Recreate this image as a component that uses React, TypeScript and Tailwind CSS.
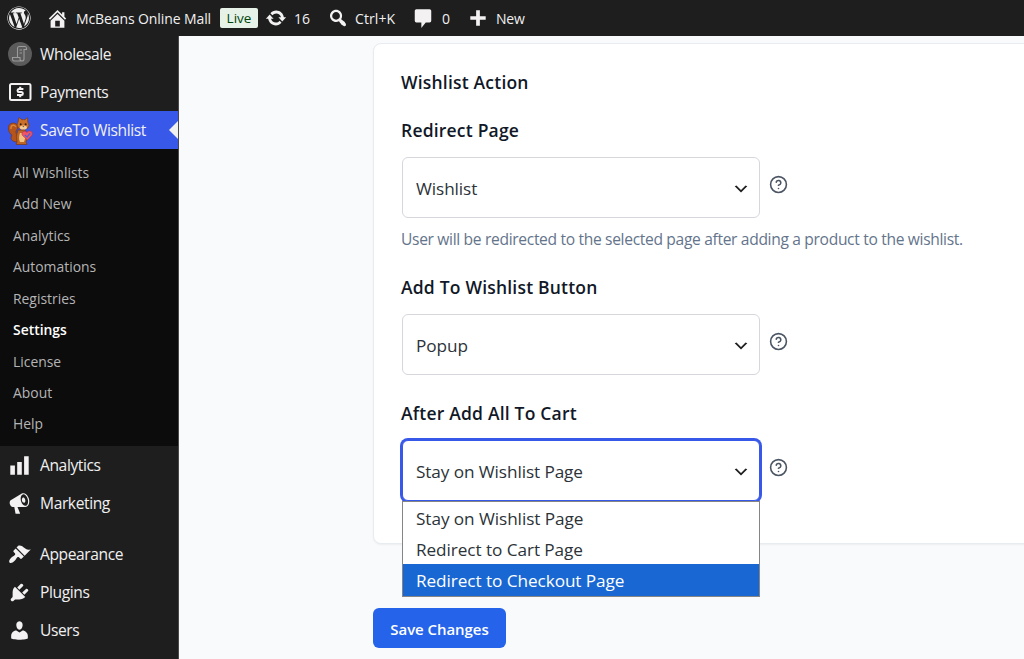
import React from "react";
import { FaWordpress } from "react-icons/fa";
import { CircleHelp } from "lucide-react";

const paths = {
    home: "M16 8.5l1.53 1.53-1.06 1.06L10 4.6l-6.47 6.49-1.06-1.06L10 2.5l4 4v-2h2v4zm-6-2.46l6 5.99V18H4v-5.97zM12 17v-5H8v5h4z",
    update: "M10.2 3.28c3.53 0 6.43 2.61 6.92 6h2.08l-3.5 4-3.5-4h2.32c-.45-1.97-2.21-3.45-4.32-3.45-1.45 0-2.73.71-3.54 1.78L4.95 5.66C6.23 4.2 8.11 3.28 10.2 3.28zm-.4 13.44c-3.52 0-6.43-2.61-6.92-6H.8l3.5-4c1.17 1.33 2.33 2.67 3.5 4H5.48c.45 1.97 2.21 3.45 4.32 3.45 1.45 0 2.73-.71 3.54-1.78l1.71 1.95c-1.28 1.46-3.15 2.38-5.25 2.38z",
    search: "M12.14 4.18c1.87 1.87 2.11 4.75.72 6.89.12.1.22.21.36.31.2.16.47.36.81.59.34.24.56.39.66.47.42.31.73.57.94.78.32.32.6.65.84 1 .25.35.44.69.59 1.04.14.35.21.68.18 1-.02.32-.14.59-.36.81s-.49.34-.81.36c-.31.02-.65-.04-.99-.19-.35-.14-.7-.34-1.04-.59-.35-.24-.68-.52-1-.84-.21-.21-.47-.52-.77-.93-.1-.13-.25-.35-.47-.66-.22-.32-.4-.57-.56-.78-.16-.2-.29-.35-.44-.5-2.07 1.09-4.69.76-6.44-.98-2.14-2.15-2.14-5.64 0-7.78 2.15-2.15 5.63-2.15 7.78 0zm-1.41 6.36c1.36-1.37 1.36-3.58 0-4.95-1.37-1.37-3.59-1.37-4.95 0-1.37 1.37-1.37 3.58 0 4.95 1.36 1.37 3.58 1.37 4.95 0z",
    comment: "M4 2h12q1.5 0 1.5 1.5v9q0 1.5-1.5 1.5h-3.5l-4 5v-5H4q-1.5 0-1.5-1.5v-9Q2.5 2 4 2z",
    plus: "M17 8.3v3.4h-5.3V17H8.3v-5.3H3V8.3h5.3V3h3.4v5.3z",
    chart: "M18 18V2h-4v16h4zm-6 0V7H8v11h4zm-6 0v-8H2v8h4z",
    megaphone: "M18.15 5.94c.46 1.62.38 3.22-.02 4.48-.42 1.28-1.26 2.18-2.3 2.48-.16.06-.26.06-.4.06-.06.02-.12.02-.18.02-.06.02-.14.02-.22.02h-6.8l2.22 5.5c.02.14-.06.26-.14.34-.08.1-.24.16-.34.16H6.95c-.1 0-.26-.06-.34-.16-.08-.08-.16-.2-.14-.34l-1-5.5H4.25l-.02-.02c-.5.06-1.08-.18-1.54-.62s-.88-1.08-1.06-1.88c-.24-.8-.2-1.56-.02-2.2.18-.62.58-1.08 1.06-1.3l.02-.02 9-5.4c.1-.06.18-.1.24-.16.06-.04.14-.08.24-.12.16-.08.28-.12.5-.18 1.04-.3 2.24.1 3.22.98s1.84 2.24 2.26 3.86zm-2.58 5.98h-.02c.4-.1.74-.34 1.04-.7.58-.7.86-1.76.86-3.04 0-.64-.1-1.3-.28-1.98-.34-1.36-1.02-2.5-1.78-3.24s-1.68-1.1-2.46-.88c-.82.22-1.4.96-1.7 2-.32 1.04-.28 2.36.06 3.72.38 1.36 1 2.5 1.8 3.24.78.74 1.62 1.1 2.48.88zm-2.54-7.08c.22-.04.42-.02.62.04.38.16.76.48 1.02 1s.42 1.2.42 1.78c0 .3-.04.56-.12.8-.18.48-.44.84-.86.94-.34.1-.8-.06-1.14-.4s-.64-.86-.78-1.5c-.18-.62-.12-1.24.02-1.72s.48-.84.82-.94z",
    appearance: "M14.48 11.06L7.41 3.99l1.5-1.5c.5-.56 2.3-.47 3.51.32 1.21.8 1.43 1.28 2.91 2.1 1.18.64 2.45 1.26 4.45.85zm-.71.71L6.7 4.7 4.93 6.47c-.39.39-.39 1.02 0 1.41l1.06 1.06c.39.39.39 1.03 0 1.42-.6.6-1.43 1.11-2.21 1.69-.35.26-.7.53-1.01.84C1.43 14.23.4 16.08 1.4 17.07c.99 1 2.84-.03 4.18-1.36.31-.31.58-.66.85-1.02.57-.78 1.08-1.61 1.69-2.21.39-.39 1.02-.39 1.41 0l1.06 1.06c.39.39 1.02.39 1.41 0z",
    plugins: "M13.11 4.36L9.87 7.6 8 5.73l3.24-3.24c.35-.34 1.05-.2 1.56.32.52.51.66 1.21.31 1.55zm-8 1.77l.91-1.12 9.01 9.01-1.19.84c-.71.71-2.63 1.16-3.82 1.16H6.14L4.9 17.26c-.59.59-1.54.59-2.12 0-.59-.58-.59-1.53 0-2.12l1.24-1.24v-3.88c0-1.13.4-3.19 1.09-3.89zm7.26 3.97l3.24-3.24c.34-.35 1.04-.21 1.55.31.52.51.66 1.21.31 1.55l-3.24 3.25z",
    users: "M10 9.25c-2.27 0-2.73-3.44-2.73-3.44C7 4.02 7.82 2 9.97 2c2.16 0 2.98 2.02 2.71 3.81 0 0-.41 3.44-2.68 3.44zm0 2.57L12.72 10c2.39 0 4.52 2.33 4.52 4.53v2.49s-3.65 1.13-7.24 1.13c-3.65 0-7.24-1.13-7.24-1.13v-2.49c0-2.25 1.94-4.48 4.47-4.48z",
};

function DashIcon({ name, className = "" }: { name: keyof typeof paths; className?: string }) {
    return (
        <svg viewBox="0 0 20 20" className={`shrink-0 fill-[#f3f1f1] ${className}`}>
            <path d={paths[name]} />
        </svg>
    );
}

function WholesaleIcon() {
    return (
        <svg viewBox="0 0 24 24" className="size-6" fill="none">
            <circle cx="12" cy="12" r="12" fill="#5b5b5b" />
            <path d="M9.5 15.5V6.5q0-2 2-2h5.5q1.5 0 1.5 2v1h-2.5M16 7v10q0 2-2 2H6q-1.5 0-1.5-2v-1.5h7.5v1.5q0 2 2 2M11.5 8h2.5M11.5 11h2.5" stroke="#9b9b9b" strokeWidth="1.1" />
        </svg>
    );
}

function PaymentsIcon() {
    return (
        <svg viewBox="0 0 24 20" className="w-6 h-5" fill="none" stroke="#f3f1f1">
            <rect x="2" y="2" width="20.5" height="16" rx="1.5" strokeWidth="2" />
            <path d="M15.4 7h-4.6q-1.2 0-1.2 1.5T10.8 10h2.8q1.2 0 1.2 1.5T13.6 13H9M12.2 4.8v2.2M12.2 13v2.2" strokeWidth="2.1" />
        </svg>
    );
}

function SquirrelIcon() {
    return (
        <svg viewBox="0 0 26 30" className="mt-0.5 w-[26px] h-[30px]">
            {/* tail */}
            <path d="M11 26C4 26 3 22 5 19C1 17 0 9 4 7.5c4-1.5 7.5 1 6.5 5-1 2-2 2.5-1.5 4.5 1 3 3 4 3 9z" fill="#b5551c" stroke="#7a3514" strokeWidth=".7" />
            <path d="M4 13c-.5-4 3-5 5-2" fill="none" stroke="#dc853b" strokeWidth="1.3" />
            {/* body */}
            <path d="M11 14q-3 6-1 12l-1 2.5h11l-1-2.5q3-5-1-12z" fill="#bd6524" stroke="#7a3514" strokeWidth=".7" />
            <path d="M13 17q-2 5 0 9h4q2-4 1-9z" fill="#f0c183" />
            {/* head */}
            <path d="M11 6L12 1.5l3 2.3q1.5-.5 3 0L20.5 1.5l.3 4.5q2.4 3.5 0 6-4.8 3-9.3 0-2.5-2.5-.5-6z" fill="#ca7029" stroke="#7a3514" strokeWidth=".6" />
            <ellipse cx="16.3" cy="11.5" rx="3.6" ry="2.1" fill="#f3cc96" />
            <circle cx="13.7" cy="8.3" r="1" fill="#33201a" />
            <circle cx="18.6" cy="8.3" r="1" fill="#33201a" />
            <path d="M15.3 10.3h2l-1 1z" fill="#4d2517" />
            {/* heart */}
            <path d="M20.5 24l-5-4.5c-2-3 2-6 4.5-3 2.5-3.3 7-.5 4.8 2.8z" fill="#f05465" stroke="#b9324c" strokeWidth=".6" />
            <path d="M17.9 19l2.2 2 3.2-3.7" fill="none" stroke="#5361d8" strokeWidth="1.3" />
        </svg>
    );
}

function MenuItem({ label, active, children }: { label: string; active?: boolean; children: React.ReactNode }) {
    return (
        <div className={`relative flex h-[38px] shrink-0 items-center pl-[6px] text-[15.6px] tracking-[-0.4px] text-[#f0f0f1] ${active ? "bg-[#3858e9]" : ""}`}>
            <span className="flex w-[27px] justify-center">{children}</span>
            <span className="ml-[7px] pt-[1.5px]">{label}</span>
            {active && <span className="absolute right-0 border-y-[9px] border-r-[9px] border-y-transparent border-r-[#f0f0f1]" />}
        </div>
    );
}

const submenu = ["All Wishlists", "Add New", "Analytics", "Automations", "Registries", "Settings", "License", "About", "Help"];

function Sidebar() {
    return (
        <aside className="flex w-[179px] shrink-0 flex-col overflow-hidden bg-[#1e1e1e] border-r border-[#4a4a4a]">
            <div className="-mt-px flex flex-col">
                <MenuItem label="Wholesale"><WholesaleIcon /></MenuItem>
                <MenuItem label="Payments"><PaymentsIcon /></MenuItem>
                <MenuItem label="SaveTo Wishlist" active><SquirrelIcon /></MenuItem>
            </div>
            <div className="h-[297px] shrink-0 bg-[#0c0c0c] pt-[8.6px] pl-[13px] text-[13.9px] text-[#b5b5b6]">
                {submenu.map((item) => (
                    <div key={item} className={`flex h-[31.45px] items-center ${item === "Settings" ? "font-semibold text-white" : ""}`}>
                        {item}
                    </div>
                ))}
            </div>
            <MenuItem label="Analytics"><DashIcon name="chart" className="size-[23px]" /></MenuItem>
            <MenuItem label="Marketing"><DashIcon name="megaphone" className="size-[23px]" /></MenuItem>
            <div className="h-[13px] shrink-0" />
            <MenuItem label="Appearance"><DashIcon name="appearance" className="size-[23px]" /></MenuItem>
            <MenuItem label="Plugins"><DashIcon name="plugins" className="size-[23px]" /></MenuItem>
            <MenuItem label="Users"><DashIcon name="users" className="size-[23px]" /></MenuItem>
        </aside>
    );
}

function TopBar() {
    return (
        <header className="flex h-9 shrink-0 items-center bg-[#1e1e1e] pl-[7px] text-[14px] text-[#f0f0f1]">
            <FaWordpress size={24} />
            <DashIcon name="home" className="ml-[15px] size-[23px]" />
            <span className="ml-[7px] w-[144px] whitespace-nowrap pt-px tracking-[-0.1px]">McBeans Online Mall</span>
            <span className="flex h-5 w-[38px] items-center justify-center rounded-[2px] bg-[#e6f2e8] text-[13.5px] text-[#00450c]">Live</span>
            <DashIcon name="update" className="ml-[7px] size-[22px]" />
            <span className="ml-[7px] w-[33px] pt-px">16</span>
            <DashIcon name="search" className="size-[22px]" />
            <span className="ml-[6px] w-[57px] pt-px tracking-[0.1px]">Ctrl+K</span>
            <DashIcon name="comment" className="size-[22px]" />
            <span className="ml-[8px] w-[25px] pt-px">0</span>
            <DashIcon name="plus" className="size-[22px]" />
            <span className="ml-[7px] pt-px tracking-[-0.2px]">New</span>
        </header>
    );
}

function SelectField({ label, value, open, children }: { label: string; value: string; open?: boolean; children?: React.ReactNode }) {
    return (
        <div>
            <h3 className="h-[27px] text-[17.5px] leading-[27px] font-semibold tracking-[0.2px] text-[#111827]">{label}</h3>
            <div className="relative mt-[13px] ml-px flex items-start">
                <div className={`flex h-[61px] w-[357.5px] items-center justify-between rounded-md border bg-white pr-[9px] pl-[13px] ${open ? "border-[#3858e9] ring-2 ring-[#3858e9]" : "border-[#d5d7dd]"}`}>
                    <span className="pt-0.5 text-[17.2px] tracking-[-0.09px] text-[#2c3338]">{value}</span>
                    <svg viewBox="0 0 20 20" className="mt-0.5 size-[18px]">
                        <path d="M5 6l5 5 5-5 2 1-7 7-7-7 2-1z" fill="#1f1f1f" />
                    </svg>
                </div>
                <CircleHelp size={19} strokeWidth={2} className="mt-[18px] ml-[9px] text-[#4b5563]" />
                {children}
            </div>
        </div>
    );
}

function App() {
    return (
        <div className="flex h-[659px] w-[1024px] flex-col overflow-hidden bg-[#f9fafc] font-['Open_Sans','Noto_Sans',sans-serif]">
            <TopBar />
            <div className="flex min-h-0 flex-1">
                <Sidebar />
                <main className="flex-1 pt-[7px] pl-[194px]">
                    <section className="h-[501px] w-[700px] rounded-lg border border-[#e8ebf0] bg-white pt-[25px] pl-[27px] shadow-xs">
                        <h2 className="mb-[21px] h-[27px] text-[17.5px] leading-[27px] font-semibold tracking-[0.2px] text-[#111827]">Wishlist Action</h2>
                        <SelectField label="Redirect Page" value="Wishlist" />
                        <p className="mt-[9px] mb-[22px] h-[25px] text-[15.6px] leading-[25px] tracking-[-0.33px] text-[#64748b]">
                            User will be redirected to the selected page after adding a product to the wishlist.
                        </p>
                        <SelectField label="Add To Wishlist Button" value="Popup" />
                        <div className="h-[25px]" />
                        <SelectField label="After Add All To Cart" value="Stay on Wishlist Page" open>
                            <ul className="absolute top-[61px] left-0 z-10 h-[96px] w-[357.5px] border border-[#858585] bg-white text-[17.2px] tracking-[-0.07px] text-[#2c3338]">
                                <li className="flex h-[31px] items-center pt-0.5 pl-[13px]">Stay on Wishlist Page</li>
                                <li className="flex h-[31px] items-center pt-0.5 pl-[13px]">Redirect to Cart Page</li>
                                <li className="flex h-[32px] items-center bg-[#1967d2] pt-0.5 pl-[13px] text-white">Redirect to Checkout Page</li>
                            </ul>
                        </SelectField>
                    </section>
                    <button className="mt-[64px] h-10 w-[133px] rounded-md bg-[#2563eb] pt-0.5 text-[15px] font-semibold tracking-[-0.05px] text-white">Save Changes</button>
                </main>
            </div>
        </div>
    );
}

export default App;
